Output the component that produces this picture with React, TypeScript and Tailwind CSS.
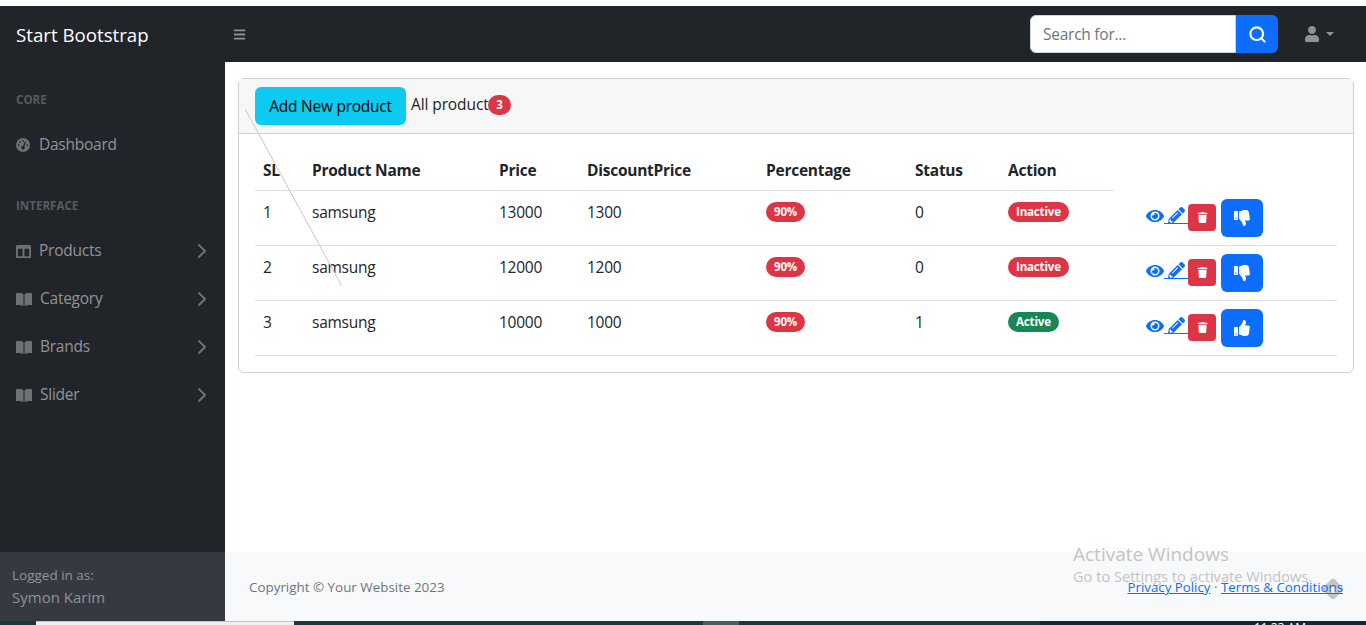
import { FaBars, FaColumns, FaEye, FaPencilAlt, FaThumbsDown, FaThumbsUp, FaTrash, FaUser } from "react-icons/fa";
import { FaGaugeHigh } from "react-icons/fa6";
import { ChevronRight, Search } from "lucide-react";
import type { ReactNode } from "react";

const products = [
  { id: 1, price: 13000, discount: 1300, status: 0 },
  { id: 2, price: 12000, discount: 1200, status: 0 },
  { id: 3, price: 10000, discount: 1000, status: 1 },
];

function Badge({ children, color }: { children: ReactNode; color: string }) {
  return (
    <span className={`mt-[2px] block w-fit rounded-full px-2 py-[3px] text-[11.6px] leading-[14px] font-bold tracking-[-0.2px] text-white ${color}`}>
      {children}
    </span>
  );
}

function BookIcon() {
  return (
    <svg width="16" height="13" viewBox="0 0 16 13" fill="currentColor">
      <path d="M0 .4C2.5-.1 5.4 0 7.5 1.2V13C5.4 11.9 2.5 11.7 0 12.2Z" />
      <path d="M16 .4C13.5-.1 10.6 0 8.5 1.2V13C10.6 11.9 13.5 11.7 16 12.2Z" />
    </svg>
  );
}

function NavItem({ icon, label, gap }: { icon: ReactNode; label: string; gap: string }) {
  return (
    <div className={`flex h-12 items-center px-4 text-[#919395] ${gap}`}>
      <span className="text-[#6e7072]">{icon}</span>
      <span>{label}</span>
      <ChevronRight className="-mr-[5px] ml-auto text-[#6e7072]" size={24} strokeWidth={2} />
    </div>
  );
}

export default function App() {
  return (
    <div className="flex h-[625px] flex-col overflow-hidden bg-white font-['Open_Sans',sans-serif] text-[15.5px] tracking-[-0.25px] text-[#212529]">
      <div className="h-[6px] shrink-0 bg-white" />

      {/* TOP NAV */}
      <nav className="flex h-14 shrink-0 items-center bg-[#212529]">
        <div className="w-[225px] pl-4 pt-[2px] text-[18.7px] tracking-normal text-white">Start Bootstrap</div>
        <FaBars className="ml-2 text-[#8f9192]" size={13} />
        <div className="ml-auto flex h-[38px] w-[248px]">
          <input
            placeholder="Search for..."
            className="min-w-0 flex-1 rounded-l-[6px] border border-[#ced4da] bg-white pl-3 pt-px text-[#212529] placeholder:text-[#6c757d]"
          />
          <button className="flex w-[42px] items-center justify-center rounded-r-[6px] bg-[#0d6efd] text-white">
            <Search size={19} strokeWidth={2.6} />
          </button>
        </div>
        <div className="ml-[26px] mr-[32px] flex items-center gap-[6px] text-[#8f9192]">
          <FaUser size={16} />
          <span className="border-x-[4px] border-t-[4px] border-x-transparent border-t-[#8f9192]" />
        </div>
      </nav>

      <div className="flex min-h-0 flex-1">
        {/* SIDEBAR */}
        <aside className="flex w-[225px] shrink-0 flex-col bg-[#212529]">
          <div className="flex-1 pt-[29px]">
            <p className="px-4 text-[11.6px] leading-[18px] font-bold tracking-normal text-[#585b5e]">CORE</p>
            <div className="mt-[12px] flex h-12 items-center gap-[9px] px-4 text-[#919395]">
              <FaGaugeHigh className="text-[#6e7072]" size={14} />
              <span>Dashboard</span>
            </div>
            <p className="mt-[28px] px-4 text-[11.6px] leading-[18px] font-bold tracking-normal text-[#585b5e]">INTERFACE</p>
            <div className="mt-[12px]">
              <NavItem icon={<FaColumns size={15} />} label="Products" gap="gap-[8px]" />
              <NavItem icon={<BookIcon />} label="Category" gap="gap-[8px]" />
              <NavItem icon={<BookIcon />} label="Brands" gap="gap-[8px]" />
              <NavItem icon={<BookIcon />} label="Slider" gap="gap-[8px]" />
            </div>
          </div>
          <div className="h-[69px] bg-[#343a40] px-3 pt-[13px] tracking-normal text-[#919395]">
            <p className="text-[13.5px] leading-[20px]">Logged in as:</p>
            <p className="text-[15px] leading-[24px]">Symon Karim</p>
          </div>
        </aside>

        {/* MAIN */}
        <main className="flex min-w-0 flex-1 flex-col">
          <div className="flex-1 pl-[13px] pr-[12px] pt-4">
            <section className="rounded-[6px] border border-[#d0d0d0]">
              <header className="flex h-[55px] items-start border-b border-[#d0d0d0] bg-[#f7f7f7] pl-4 pt-2">
                <button className="flex h-[38px] w-[151px] items-center justify-center rounded-[6px] bg-[#0dcaf0] pt-px text-black">Add New product</button>
                <span className="ml-[5px] mt-[6px] w-[77px] whitespace-nowrap tracking-[-0.1px]">All product</span>
                <span className="mt-[8px] flex h-5 w-[23px] items-center justify-center rounded-full bg-[#dc3545] text-[11.5px] font-bold text-white">3</span>
              </header>
              <div className="p-4">
                <table className="w-[1082px] table-fixed border-collapse text-left">
                  <colgroup>
                    <col className="w-[49px]" />
                    <col className="w-[187px]" />
                    <col className="w-[88px]" />
                    <col className="w-[179px]" />
                    <col className="w-[149px]" />
                    <col className="w-[93px]" />
                    <col className="w-[114px]" />
                    <col className="w-[223px]" />
                  </colgroup>
                  <thead>
                    <tr>
                      {["SL", "Product Name", "Price", "DiscountPrice", "Percentage", "Status", "Action"].map((h) => (
                        <th key={h} className="border-b border-[#dee2e6] p-2 leading-[24px] font-bold">{h}</th>
                      ))}
                    </tr>
                  </thead>
                  <tbody>
                    {products.map((p) => (
                      <tr key={p.id} className="border-b border-[#dee2e6]">
                        <td className="px-2 pb-[7px] pt-[9px] align-top leading-[24px]">{p.id}</td>
                        <td className="px-2 pb-[7px] pt-[9px] align-top leading-[24px]">samsung</td>
                        <td className="px-2 pb-[7px] pt-[9px] align-top leading-[24px]">{p.price}</td>
                        <td className="px-2 pb-[7px] pt-[9px] align-top leading-[24px]">{p.discount}</td>
                        <td className="px-2 pb-[7px] pt-[9px] align-top leading-[24px]"><Badge color="bg-[#dc3545]">90%</Badge></td>
                        <td className="px-2 pb-[7px] pt-[9px] align-top leading-[24px]">{p.status}</td>
                        <td className="px-2 pb-[7px] pt-[9px] align-top leading-[24px]">
                          {p.status ? <Badge color="bg-[#198754]">Active</Badge> : <Badge color="bg-[#dc3545]">Inactive</Badge>}
                        </td>
                        <td className="py-2 pl-[32px]">
                          <div className="flex h-[38px] items-center text-[#0d6efd]">
                            <div className="flex -translate-y-[2px] items-center">
                              <FaEye size={18} />
                              <span className="flex h-[17px] w-[24px] items-start justify-center border-b border-[#0d6efd]"><FaPencilAlt size={17} /></span>
                            </div>
                            <span className="flex h-[27px] w-[28px] items-center justify-center rounded-[4px] bg-[#dc3545] text-white"><FaTrash size={11} /></span>
                            <span className="ml-[5px] flex h-[38px] w-[42px] items-center justify-center rounded-[6px] bg-[#0d6efd] text-white">
                              {p.status ? <FaThumbsUp size={16} /> : <FaThumbsDown size={16} />}
                            </span>
                          </div>
                        </td>
                      </tr>
                    ))}
                  </tbody>
                </table>
              </div>
            </section>
          </div>

          {/* FOOTER */}
          <footer className="relative flex h-[69px] items-center justify-between bg-[#f8f9fa] pl-6 pr-[23px] pt-px text-[13.4px] tracking-normal text-[#6c757d]">
            <span>Copyright © Your Website 2023</span>
            <span className="relative z-10 mt-[2px] text-[13.3px]">
              <a className="text-[#0d6efd] underline">Privacy Policy</a> · <a className="text-[#0d6efd] underline">Terms &amp; Conditions</a>
            </span>
            <div className="absolute left-[848px] top-[-10px] text-[#c4c4c4]">
              <p className="text-[19px] leading-[24px]">Activate Windows</p>
              <p className="text-[14.6px] leading-[21px]">Go to Settings to activate Windows.</p>
            </div>
            <span className="absolute left-[1100px] top-[29px] flex h-4 w-4 rotate-45 items-center justify-center rounded-[3px] bg-[#c4c4c4]">
              <span className="h-[5px] w-[5px] bg-white" />
            </span>
          </footer>
        </main>
      </div>

      {/* TASKBAR SLIVER */}
      <div className="flex h-1 shrink-0 overflow-hidden bg-[#1f3640]">
        <div className="ml-[36px] w-[258px] border-t border-[#c4c4c4] bg-[#f0f0f0]" />
        <div className="ml-[409px] w-[36px] bg-[#4d5c64]" />
        <div className="ml-auto flex w-[326px] justify-end bg-[#1a2438] pr-[60px] pt-px text-[12px] leading-[12px] tracking-normal text-white">11:23 AM</div>
      </div>

      {/* stray line over the card */}
      <svg className="pointer-events-none absolute left-[245px] top-[109px]" width="97" height="177" fill="none">
        <path d="M0.5 0.5 96.5 176.5" stroke="#c8c8c8" strokeWidth="1" />
      </svg>
    </div>
  );
}
